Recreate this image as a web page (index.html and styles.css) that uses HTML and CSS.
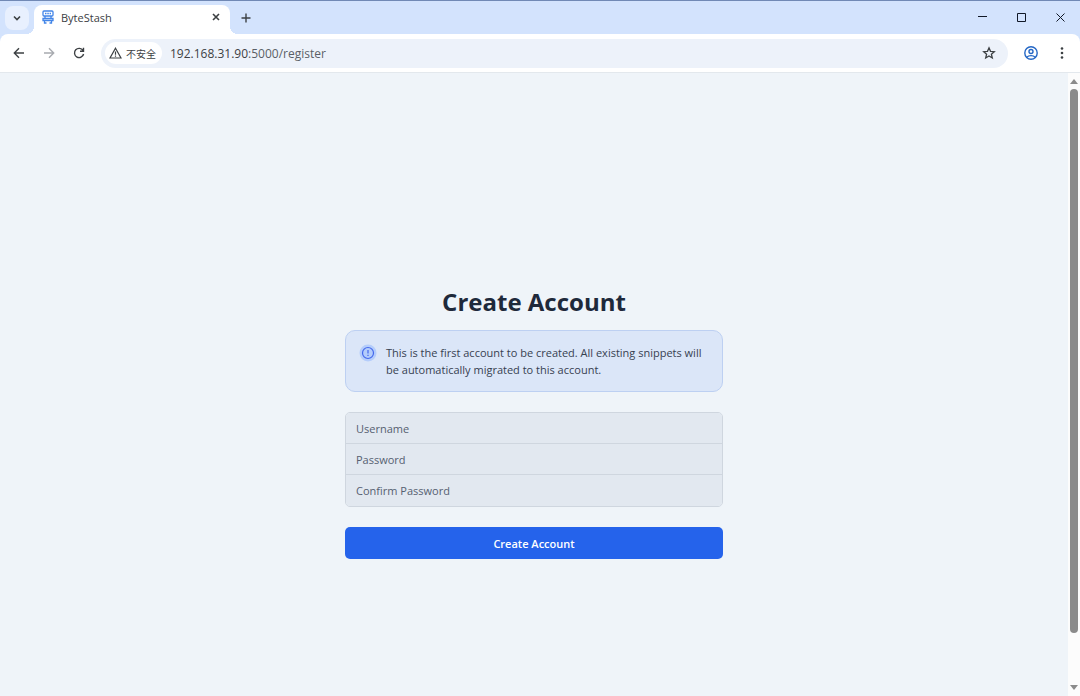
FILE: index.html
```html
<!DOCTYPE html>
<html lang="en">
<head>
  <meta charset="UTF-8" />
  <title>ByteStash</title>
  <meta name="viewport" content="width=device-width, initial-scale=1.0" />
  <link rel="stylesheet" href="styles.css">
</head>
<body>

  <header class="browser">
    <div class="tab-strip">
      <button class="tab-search" aria-label="Search tabs">
        <svg width="10" height="10" viewBox="0 0 10 10"><path d="M2 3.500l3 3 3-3" /></svg>
      </button>
      <div class="tab">
        <svg class="favicon" width="12" height="14" viewBox="0 0 12 14">
          <rect x="1" y="1" width="10" height="5" rx="1" />
          <path d="M3 3.500h1.500M5.300 3.500h1.500M7.600 3.500H9M3 6v2M9 6v2" />
          <path d="M1 8.500h10v2H1zM2.500 10.500V13h2M9.500 10.500V13h-2" />
        </svg>
        <span class="tab-title">ByteStash</span>
        <button class="icon-btn tab-close" aria-label="Close tab">
          <svg width="8" height="8" viewBox="0 0 8 8"><path d="M1 1l6 6M7 1L1 7" /></svg>
        </button>
      </div>
      <button class="icon-btn new-tab" aria-label="New tab">
        <svg width="10" height="10" viewBox="0 0 10 10"><path d="M5 .5v9M.5 5h9" /></svg>
      </button>
      <div class="window-controls">
        <button class="icon-btn" aria-label="Minimize">
          <svg width="9" height="9" viewBox="0 0 9 9"><path d="M0 3.500h9" /></svg>
        </button>
        <button class="icon-btn" aria-label="Maximize">
          <svg width="9" height="9" viewBox="0 0 9 9"><path d="M.5.5h8v8h-8z" /></svg>
        </button>
        <button class="icon-btn" aria-label="Close">
          <svg width="9" height="9" viewBox="0 0 9 9"><path d="M.5.5l8 8M8.500.5l-8 8" /></svg>
        </button>
      </div>
    </div>

    <div class="toolbar">
      <div class="nav">
        <button class="icon-btn" aria-label="Back">
          <svg width="12" height="12" viewBox="0 0 12 12"><path d="M11 6H1.500M6 1.300L1.300 6 6 10.700" /></svg>
        </button>
        <button class="icon-btn forward" aria-label="Forward">
          <svg width="12" height="12" viewBox="0 0 12 12"><path d="M1 6h9.500M6 1.300L10.700 6 6 10.700" /></svg>
        </button>
        <button class="icon-btn" aria-label="Reload">
          <svg width="12" height="12" viewBox="0 0 12 12"><path d="M10 3.500A4.600 4.600 0 1 0 10.600 7M10.500.8v3.500H7" /></svg>
        </button>
      </div>
      <div class="address">
        <button class="security">
          <svg width="13" height="12" viewBox="0 0 13 12"><path d="M6.500 1.200L12 11H1zM6.500 4.500v3.200M6.500 8.600v1.200" /></svg>
          <span>不安全</span>
        </button>
        <span class="url">192.168.31.90<span class="path">:5000/register</span></span>
        <button class="icon-btn star" aria-label="Bookmark this page">
          <svg width="14" height="14" viewBox="0 0 14 14"><path d="M7 1.800l1.500 3.500 3.800.4-2.900 2.500.9 3.800L7 10l-3.300 2 .9-3.800-2.900-2.500 3.800-.4z" /></svg>
        </button>
      </div>
      <button class="icon-btn profile" aria-label="Profile">
        <svg width="14" height="14" viewBox="0 0 14 14"><circle cx="7" cy="7" r="6.200" /><circle cx="7" cy="5.500" r="2" /><path d="M2.800 11.300c2-2.200 6.400-2.200 8.400 0" /></svg>
      </button>
      <button class="icon-btn menu" aria-label="Menu">
        <svg width="4" height="14" viewBox="0 0 4 14"><circle cx="2" cy="2.500" r="1.300" /><circle cx="2" cy="7" r="1.300" /><circle cx="2" cy="11.500" r="1.300" /></svg>
      </button>
    </div>
  </header>

  <div class="viewport">
    <main class="page">
      <div class="register">
        <h1>Create Account</h1>

        <div class="notice">
          <svg width="18" height="18" viewBox="0 0 18 18">
            <circle class="halo" cx="9" cy="9" r="8.500" />
            <circle cx="9" cy="9" r="5.500" />
            <path d="M9 6v3.500M9 10.800v1.200" />
          </svg>
          <p>This is the first account to be created. All existing snippets will be automatically migrated to this account.</p>
        </div>

        <form onsubmit="return false">
          <div class="fields">
            <input type="text" name="username" placeholder="Username" aria-label="Username" />
            <input type="password" name="password" placeholder="Password" aria-label="Password" />
            <input type="password" name="confirm" placeholder="Confirm Password" aria-label="Confirm Password" />
          </div>
          <button class="btn-submit" type="submit">Create Account</button>
        </form>
      </div>
    </main>

    <div class="scrollbar">
      <svg width="8" height="5" viewBox="0 0 8 5"><path d="M4 0l4 5H0z" /></svg>
      <div class="track"><div class="thumb"></div></div>
      <svg width="8" height="5" viewBox="0 0 8 5"><path d="M0 0h8L4 5z" /></svg>
    </div>
  </div>

</body>
</html>
```
FILE: styles.css
```css
:root {
  --strip: #d3e3fd;
  --ink: #1e293b;
  --page-bg: #eff4f9;
  --primary: #2563eb;
}

* {
  box-sizing: border-box;
}

body {
  margin: 0;
  height: 100vh;
  display: flex;
  flex-direction: column;
  overflow: hidden;
  font-family: "Open Sans", "Noto Sans", "Noto Sans CJK SC", sans-serif;
  font-size: 11px;
  color: var(--ink);
}

button {
  font: inherit;
  color: inherit;
  border: none;
  padding: 0;
  cursor: pointer;
}

svg {
  display: block;
  flex: none;
  fill: none;
  stroke: currentColor;
}

.icon-btn {
  display: flex;
  align-items: center;
  justify-content: center;
  background: none;
}

/* browser frame */
.browser {
  background: var(--strip);
  color: #3c4043;
}

.tab-strip {
  height: 34px;
  display: flex;
  align-items: center;
  border-top: 1px solid #7189b5;
  padding-left: 5px;
}

.tab-search {
  width: 24px;
  height: 24px;
  display: flex;
  align-items: center;
  justify-content: center;
  background: #e8f0fe;
  border-radius: 8px;
}

.tab-search svg,
.tab-close svg {
  stroke-width: 1.6;
}

.tab {
  position: relative;
  align-self: flex-end;
  width: 196px;
  height: 29px;
  margin-left: 5px;
  padding: 0 8px 5px;
  display: flex;
  align-items: center;
  gap: 7px;
  background: #fff;
  border-radius: 8px 8px 0 0;
}

/* the flared feet of the active tab */
.tab::before,
.tab::after {
  content: "";
  position: absolute;
  bottom: 0;
  width: 8px;
  height: 8px;
}

.tab::before {
  right: 100%;
  background: radial-gradient(circle at 0 0, transparent 8px, #fff 8px);
}

.tab::after {
  left: 100%;
  background: radial-gradient(circle at 100% 0, transparent 8px, #fff 8px);
}

.favicon {
  color: #4285e8;
  stroke-width: 1.3;
}

.tab-title {
  flex: 1;
}

.tab-close {
  width: 12px;
  height: 12px;
}

.new-tab {
  width: 20px;
  height: 20px;
  margin-left: 6px;
}

.new-tab svg {
  stroke-width: 1.4;
}

.window-controls {
  display: flex;
  margin-left: auto;
}

.window-controls .icon-btn {
  width: 39px;
  height: 32px;
  color: #111827;
}

.toolbar {
  height: 39px;
  display: flex;
  align-items: center;
  background: #fff;
  border-bottom: 1px solid #e3e8ed;
  border-radius: 8px 8px 0 0;
  padding: 0 16px 0 13px;
}

.nav {
  display: flex;
  gap: 18px;
}

.nav svg {
  stroke-width: 1.4;
}

.nav .forward {
  color: #a8abb0;
}

.address {
  flex: 1;
  height: 29px;
  margin: 0 16px;
  padding: 0 12px 0 4px;
  display: flex;
  align-items: center;
  background: #edf2fa;
  border-radius: 15px;
}

.security {
  height: 22px;
  padding: 0 6px 0 4px;
  display: flex;
  align-items: center;
  gap: 4px;
  background: #fff;
  border-radius: 11px;
  font-family: "Noto Sans CJK SC", sans-serif;
  font-size: 10px;
}

.security svg {
  stroke-width: 1.2;
}

.url {
  margin-left: 8px;
  font-size: 12px;
}

.path {
  color: #5a5f66;
}

.star {
  margin-left: auto;
}

.star svg {
  stroke-width: 1.3;
}

.profile {
  color: #2467c5;
}

.profile svg {
  stroke-width: 1.4;
}

.menu {
  margin-left: 22px;
}

.menu svg {
  fill: currentColor;
  stroke: none;
}

/* page */
.viewport {
  flex: 1;
  min-height: 0;
  display: flex;
  background: var(--page-bg);
}

.page {
  flex: 1;
  padding: 213px 20px 0;
}

.register {
  max-width: 378px;
  margin: 0 auto;
}

h1 {
  margin: 0 0 12px;
  font-size: 24px;
  line-height: 32px;
  font-weight: 700;
  text-align: center;
}

.notice {
  display: flex;
  gap: 9px;
  margin-bottom: 20px;
  padding: 13px;
  background: #dbe6f8;
  border: 1px solid #bdd0f2;
  border-radius: 10px;
}

.notice svg {
  color: #4468ec;
  stroke-width: 1.2;
}

.notice .halo {
  fill: #b4cdfb;
  stroke: none;
}

.notice p {
  margin: 0;
  line-height: 17px;
  color: #374151;
}

.fields {
  margin-bottom: 20px;
  border: 1px solid #cfd6df;
  border-radius: 5px;
  overflow: hidden;
}

.fields input {
  display: block;
  width: 100%;
  height: 31px;
  padding: 0 10px;
  border: none;
  border-bottom: 1px solid #cfd6df;
  background: #e2e8f0;
  font: inherit;
  color: var(--ink);
}

.fields input:last-child {
  border-bottom: none;
}

.fields input::placeholder {
  color: #566070;
}

.btn-submit {
  display: block;
  width: 100%;
  height: 32px;
  background: var(--primary);
  color: #fff;
  font-weight: 600;
  border-radius: 5px;
}

.btn-submit:hover {
  background: #1d4ed8;
}

.scrollbar {
  width: 12px;
  padding: 6px 0;
  display: flex;
  flex-direction: column;
  align-items: center;
  gap: 5px;
  background: #fcfcfc;
  color: #8b8b8b;
}

.scrollbar svg {
  fill: currentColor;
  stroke: none;
}

.track {
  flex: 1;
}

.thumb {
  width: 8px;
  height: 92%;
  background: currentColor;
  border-radius: 4px;
}
```
